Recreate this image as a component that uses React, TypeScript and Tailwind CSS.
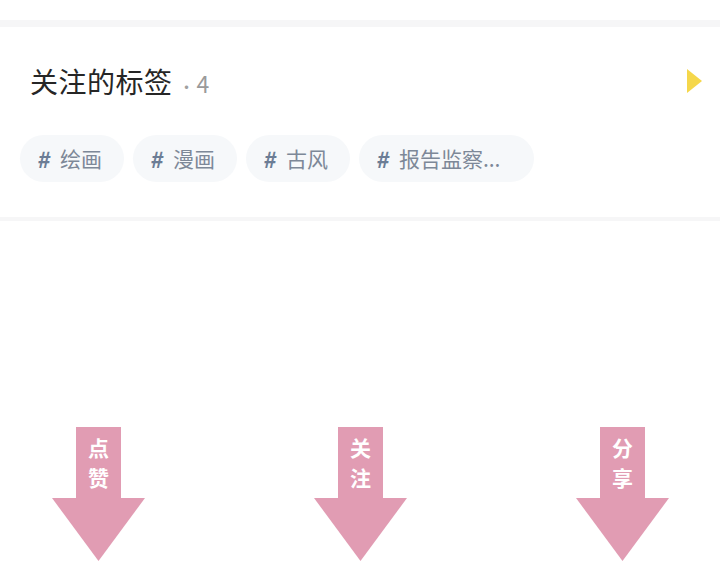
const tags = ["绘画", "漫画", "古风", "报告监察..."]

const arrows = [
    { label: ["点", "赞"] },
    { label: ["关", "注"] },
    { label: ["分", "享"] },
]

function DownArrow({ label }: { label: string[] }) {
    return (
        <div className="flex flex-col items-center w-[93px]">
            <div className="w-[45px] h-[71px] bg-[#e19cb3] flex flex-col items-center pt-[5px] text-white font-bold text-[21px] leading-[30px]">
                {label.map((c) => (
                    <span key={c}>{c}</span>
                ))}
            </div>
            <svg width="93" height="63" viewBox="0 0 93 63" className="block">
                <polygon points="0,0 93,0 46.5,63" fill="#e19cb3" />
            </svg>
        </div>
    )
}

export default function App() {
    return (
        <div
            className="w-[720px] h-[562px] bg-white overflow-hidden"
            style={{ fontFamily: '"Noto Sans CJK SC", "Noto Sans", sans-serif' }}
        >
            <div className="h-[20px] bg-white" />
            <div className="h-[7px] bg-[#f6f6f7]" />

            <section className="h-[190px] bg-white pl-[20px] pr-[18px]">
                <div className="flex items-center justify-between h-[108px] pl-[10px]">
                    <div className="flex items-baseline">
                        <h2 className="text-[28px] text-[#262626] font-normal tracking-[0.5px]">关注的标签</h2>
                        <span className="ml-[6px] text-[16px] text-[#a0a0a0]">·</span>
                        <span className="ml-[2px] text-[23px] text-[#9a9a9a]">4</span>
                    </div>
                    <svg width="15" height="24" viewBox="0 0 15 24">
                        <polygon points="0,0 15,12 0,24" fill="#f5d74b" />
                    </svg>
                </div>
                <div className="flex gap-[9px]">
                    {tags.map((t, i) => (
                        <div
                            key={t}
                            className={`h-[47px] flex items-center pl-[18px] rounded-full bg-[#f6f8fa] text-[21px] text-[#7d8898] ${
                                i === 3 ? "pr-[34px]" : "pr-[22px]"
                            }`}
                        >
                            <span className="font-bold text-[22px] text-[#6c7d95] mr-[9px] -skew-x-6">#</span>
                            <span>{t}</span>
                        </div>
                    ))}
                </div>
            </section>

            <div className="h-[4px] bg-[#f6f6f7]" />

            <div className="flex pl-[52px] gap-[169px] pt-[206px]">
                {arrows.map((a) => (
                    <DownArrow key={a.label.join("")} label={a.label} />
                ))}
            </div>
        </div>
    )
}
